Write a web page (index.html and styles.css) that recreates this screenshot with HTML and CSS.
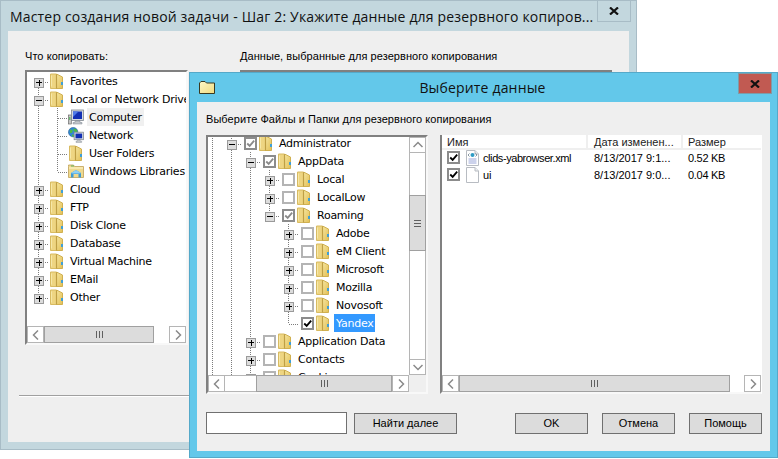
FILE: index.html
```html
<!DOCTYPE html>
<html lang="ru">
<head>
    <meta charset="UTF-8">
    <title>Мастер создания новой задачи</title>
    <link rel="stylesheet" href="styles.css">
</head>
<body>
    <svg class="sprite" aria-hidden="true">
        <defs>
            <linearGradient id="folderFront" x1="0" y1="0" x2="1" y2="1">
                <stop offset="0" stop-color="#f6e6a0"/>
                <stop offset="1" stop-color="#e2bf55"/>
            </linearGradient>
            <linearGradient id="smallFolder" x1="0" y1="0" x2="1" y2="1">
                <stop offset="0" stop-color="#fdf8c8"/>
                <stop offset="1" stop-color="#f0dc80"/>
            </linearGradient>
            <symbol id="folder" viewBox="0 0 13 16">
                <path d="M.5 1h5.500l1 1v13.500H.5z" fill="#eed582" stroke="#d8bb62" stroke-width="1"/>
                <path d="M6.500 1l6 3v11.500h-6z" fill="url(#folderFront)" stroke="#d0b050" stroke-width="1"/>
                <path d="M6.500 1.500v14" stroke="#bf9f45" stroke-width="1.200"/>
                <path d="M1.500 2.500v11" stroke="#f6e8a8" stroke-width="1"/>
                <rect x="11" y="9" width="2" height="3" fill="#3f9fd6"/>
            </symbol>
            <symbol id="computer" viewBox="0 0 16 16">
                <rect x=".3" y="6" width="3" height="9" fill="#c6c6c6" stroke="#5f5f5f" stroke-width=".6"/>
                <rect x="1.300" y="8" width="1" height="3" fill="#3fae4a"/>
                <rect x="3.500" y="1" width="12" height="10.500" fill="#d4dae0" stroke="#7f8790" stroke-width=".8"/>
                <rect x="5" y="2.500" width="9" height="7.500" fill="#1230b4"/>
                <path d="M5 2.500h5.500L5 8z" fill="#4e7be8"/>
                <path d="M7 12h5v1.500h2V15H5v-1.500h2z" fill="#c4c8cc" stroke="#7f8790" stroke-width=".5"/>
            </symbol>
            <symbol id="network" viewBox="0 0 17 17">
                <circle cx="5.500" cy="5.500" r="5" fill="#2f86d8" stroke="#25598f" stroke-width=".6"/>
                <path d="M2 3c2-1 3 0 3 1.500S3 7 2 6.500zM6 1.500c2 0 4 1 4 3S8 6 7 5s-2-2-1-3.500zM4 8c1.500 0 3 .5 2.500 2.500L4.500 10z" fill="#4cb848"/>
                <rect x="6.500" y="5.500" width="10" height="8" fill="#d4dae0" stroke="#7f8790" stroke-width=".8"/>
                <rect x="8" y="7" width="7" height="5" fill="#1230b4"/>
                <path d="M10 14h3v1h1.500v1.500h-6V15H10z" fill="#c4c8cc" stroke="#7f8790" stroke-width=".4"/>
            </symbol>
            <symbol id="library" viewBox="0 0 16 14">
                <path d="M.5 2.500V1h5l1 1.500h9v11H.5z" fill="#efd98e" stroke="#bfa158" stroke-width=".8"/>
                <path d="M1 4h14" stroke="#fff7cc" stroke-width="1"/>
                <path d="M3 2h3" stroke="#5fb25f" stroke-width="1"/>
                <path d="M3 9l5-3 5 3v4.500h-2.500V10h-5v3.500H3z" fill="#3d9ad6"/>
                <path d="M3 9l5-3 5 3-1 .5H4z" fill="#8fd0f2"/>
            </symbol>
            <symbol id="xmlfile" viewBox="0 0 13 16">
                <path d="M.5.500h8.500l3.500 3.500v11.500H.5z" fill="#fff" stroke="#b8bcc2"/>
                <path d="M9 .500v3.500h3.500" fill="#e8ebee" stroke="#b8bcc2"/>
                <circle cx="6.500" cy="5" r="2" fill="#2e9bc4"/>
                <path d="M3.500 3.500L2 5l1.500 1.500M9.500 3.500L11 5 9.500 6.500" fill="none" stroke="#6b7d8c" stroke-width=".8"/>
                <path d="M2.500 9h8M2.500 11h8M2.500 13h8" stroke="#9aa6d8"/>
            </symbol>
            <symbol id="blankfile" viewBox="0 0 13 16">
                <path d="M.5.500h8.500l3.500 3.500v11.500H.5z" fill="#fff" stroke="#b8bcc2"/>
                <path d="M9 .500v3.500h3.500" fill="#eef0f2" stroke="#b8bcc2"/>
            </symbol>
            <symbol id="tick" viewBox="0 0 11 11">
                <path d="M1.500 5.500l3 3L10 2" fill="none" stroke="currentColor" stroke-width="2.200"/>
            </symbol>
            <symbol id="cross" viewBox="0 0 10 8">
                <path d="M1 .500l8 7M9 .500l-8 7" fill="none" stroke="currentColor" stroke-width="2.200"/>
            </symbol>
            <symbol id="chevL" viewBox="0 0 8 10"><path d="M6 .500L1.500 5 6 9.500" fill="none" stroke="#8a8a8a" stroke-width="1.500"/></symbol>
            <symbol id="chevR" viewBox="0 0 8 10"><path d="M2 .500L6.500 5 2 9.500" fill="none" stroke="#8a8a8a" stroke-width="1.500"/></symbol>
            <symbol id="chevU" viewBox="0 0 10 8"><path d="M.500 6L5 1.500 9.500 6" fill="none" stroke="#8a8a8a" stroke-width="1.500"/></symbol>
            <symbol id="chevD" viewBox="0 0 10 8"><path d="M.500 2L5 6.500 9.500 2" fill="none" stroke="#8a8a8a" stroke-width="1.500"/></symbol>
        </defs>
    </svg>

    <!-- back window: the wizard -->
    <div class="win win-back">
        <div class="titlebar">
            <span class="title">Мастер создания новой задачи - Шаг 2: Укажите данные для резервного копиров...</span>
            <span class="close"><svg class="cross"><use href="#cross"/></svg></span>
        </div>
        <div class="body">
            <div class="columns">
                <div class="col-what">
                    <div class="label">Что копировать:</div>
                    <div class="tree tree-what">
                        <div class="rows">
                            <div class="row"><span class="c f"><i class="exp plus"></i></span><svg class="ico"><use href="#folder"/></svg><span class="lbl">Favorites</span></div>
                            <div class="row"><span class="c t"><i class="exp"></i></span><svg class="ico"><use href="#folder"/></svg><span class="lbl">Local or Network Drives</span></div>
                            <div class="row"><span class="c v"></span><span class="c t"></span><svg class="ico big"><use href="#computer"/></svg><span class="lbl lbl-hover">Computer</span></div>
                            <div class="row"><span class="c v"></span><span class="c t"></span><svg class="ico big"><use href="#network"/></svg><span class="lbl">Network</span></div>
                            <div class="row"><span class="c v"></span><span class="c t"></span><svg class="ico"><use href="#folder"/></svg><span class="lbl">User Folders</span></div>
                            <div class="row"><span class="c v"></span><span class="c e"></span><svg class="ico big"><use href="#library"/></svg><span class="lbl">Windows Libraries</span></div>
                            <div class="row"><span class="c t"><i class="exp plus"></i></span><svg class="ico"><use href="#folder"/></svg><span class="lbl">Cloud</span></div>
                            <div class="row"><span class="c t"><i class="exp plus"></i></span><svg class="ico"><use href="#folder"/></svg><span class="lbl">FTP</span></div>
                            <div class="row"><span class="c t"><i class="exp plus"></i></span><svg class="ico"><use href="#folder"/></svg><span class="lbl">Disk Clone</span></div>
                            <div class="row"><span class="c t"><i class="exp plus"></i></span><svg class="ico"><use href="#folder"/></svg><span class="lbl">Database</span></div>
                            <div class="row"><span class="c t"><i class="exp plus"></i></span><svg class="ico"><use href="#folder"/></svg><span class="lbl">Virtual Machine</span></div>
                            <div class="row"><span class="c t"><i class="exp plus"></i></span><svg class="ico"><use href="#folder"/></svg><span class="lbl">EMail</span></div>
                            <div class="row"><span class="c e"><i class="exp plus"></i></span><svg class="ico"><use href="#folder"/></svg><span class="lbl">Other</span></div>
                        </div>
                        <div class="hbar">
                            <span class="arrow"><svg class="chev"><use href="#chevL"/></svg></span>
                            <span class="thumb thumb-what"><i class="grip"></i></span>
                            <span class="track"></span>
                            <span class="arrow"><svg class="chev"><use href="#chevR"/></svg></span>
                        </div>
                    </div>
                </div>
                <div class="col-chosen">
                    <div class="label">Данные, выбранные для резервного копирования</div>
                    <div class="chosen-box"></div>
                </div>
            </div>
            <div class="separator"></div>
        </div>
    </div>

    <!-- front window: data picker -->
    <div class="win win-front">
        <div class="titlebar">
            <svg class="title-ico" viewBox="0 0 16 13">
                <path d="M.5 12.500V2L2 .500h4L7.500 2h8v10.500z" fill="url(#smallFolder)" stroke="#3a3a20" stroke-width="1"/>
            </svg>
            <span class="title">Выберите данные</span>
            <span class="close close-red"><svg class="cross"><use href="#cross"/></svg></span>
        </div>
        <div class="body">
            <div class="label">Выберите Файлы и Папки для резервного копирования</div>
            <div class="panes">
                <div class="tree tree-pick">
                    <div class="tree-main">
                        <div class="rows">
                            <div class="row"><span class="c v"></span><span class="c t"><i class="exp"></i></span><i class="cb part"><svg class="tick"><use href="#tick"/></svg></i><svg class="ico"><use href="#folder"/></svg><span class="lbl">Administrator</span></div>
                            <div class="row"><span class="c v"></span><span class="c v"></span><span class="c t"><i class="exp"></i></span><i class="cb part"><svg class="tick"><use href="#tick"/></svg></i><svg class="ico"><use href="#folder"/></svg><span class="lbl">AppData</span></div>
                            <div class="row"><span class="c v"></span><span class="c v"></span><span class="c v"></span><span class="c t"><i class="exp plus"></i></span><i class="cb"></i><svg class="ico"><use href="#folder"/></svg><span class="lbl">Local</span></div>
                            <div class="row"><span class="c v"></span><span class="c v"></span><span class="c v"></span><span class="c t"><i class="exp plus"></i></span><i class="cb"></i><svg class="ico"><use href="#folder"/></svg><span class="lbl">LocalLow</span></div>
                            <div class="row"><span class="c v"></span><span class="c v"></span><span class="c v"></span><span class="c e"><i class="exp"></i></span><i class="cb part"><svg class="tick"><use href="#tick"/></svg></i><svg class="ico"><use href="#folder"/></svg><span class="lbl">Roaming</span></div>
                            <div class="row"><span class="c v"></span><span class="c v"></span><span class="c v"></span><span class="c"></span><span class="c t"><i class="exp plus"></i></span><i class="cb"></i><svg class="ico"><use href="#folder"/></svg><span class="lbl">Adobe</span></div>
                            <div class="row"><span class="c v"></span><span class="c v"></span><span class="c v"></span><span class="c"></span><span class="c t"><i class="exp plus"></i></span><i class="cb"></i><svg class="ico"><use href="#folder"/></svg><span class="lbl">eM Client</span></div>
                            <div class="row"><span class="c v"></span><span class="c v"></span><span class="c v"></span><span class="c"></span><span class="c t"><i class="exp plus"></i></span><i class="cb"></i><svg class="ico"><use href="#folder"/></svg><span class="lbl">Microsoft</span></div>
                            <div class="row"><span class="c v"></span><span class="c v"></span><span class="c v"></span><span class="c"></span><span class="c t"><i class="exp plus"></i></span><i class="cb"></i><svg class="ico"><use href="#folder"/></svg><span class="lbl">Mozilla</span></div>
                            <div class="row"><span class="c v"></span><span class="c v"></span><span class="c v"></span><span class="c"></span><span class="c t"><i class="exp plus"></i></span><i class="cb"></i><svg class="ico"><use href="#folder"/></svg><span class="lbl">Novosoft</span></div>
                            <div class="row"><span class="c v"></span><span class="c v"></span><span class="c v"></span><span class="c"></span><span class="c e"></span><i class="cb on"><svg class="tick"><use href="#tick"/></svg></i><svg class="ico"><use href="#folder"/></svg><span class="lbl lbl-selected">Yandex</span></div>
                            <div class="row"><span class="c v"></span><span class="c v"></span><span class="c t"><i class="exp plus"></i></span><i class="cb"></i><svg class="ico"><use href="#folder"/></svg><span class="lbl">Application Data</span></div>
                            <div class="row"><span class="c v"></span><span class="c v"></span><span class="c t"><i class="exp plus"></i></span><i class="cb"></i><svg class="ico"><use href="#folder"/></svg><span class="lbl">Contacts</span></div>
                            <div class="row"><span class="c v"></span><span class="c v"></span><span class="c t"><i class="exp plus"></i></span><i class="cb"></i><svg class="ico"><use href="#folder"/></svg><span class="lbl">Cookies</span></div>
                        </div>
                        <div class="vbar">
                            <span class="arrow-v"><svg class="chev-v"><use href="#chevU"/></svg></span>
                            <span class="vtrack vtrack-top"></span>
                            <span class="vthumb"><i class="grip-h"></i></span>
                            <span class="vtrack"></span>
                            <span class="arrow-v"><svg class="chev-v"><use href="#chevD"/></svg></span>
                        </div>
                    </div>
                    <div class="hbar-wrap">
                        <div class="hbar">
                            <span class="arrow"><svg class="chev"><use href="#chevL"/></svg></span>
                            <span class="track track-pick"></span>
                            <span class="thumb thumb-pick"><i class="grip"></i></span>
                            <span class="arrow"><svg class="chev"><use href="#chevR"/></svg></span>
                        </div>
                        <span class="corner"></span>
                    </div>
                </div>
                <div class="list">
                    <div class="list-head">
                        <span class="hd hd-name">Имя</span>
                        <span class="hd hd-date">Дата изменен...</span>
                        <span class="hd hd-size">Размер</span>
                    </div>
                    <div class="list-rows">
                        <div class="file">
                            <i class="cb on small"><svg class="tick"><use href="#tick"/></svg></i>
                            <svg class="file-ico"><use href="#xmlfile"/></svg>
                            <span class="file-name file-name-long">clids-yabrowser.xml</span>
                            <span class="file-date">8/13/2017 9:1...</span>
                            <span class="file-size">0.52 KB</span>
                        </div>
                        <div class="file">
                            <i class="cb on small"><svg class="tick"><use href="#tick"/></svg></i>
                            <svg class="file-ico"><use href="#blankfile"/></svg>
                            <span class="file-name">ui</span>
                            <span class="file-date">8/13/2017 9:0...</span>
                            <span class="file-size">0.04 KB</span>
                        </div>
                    </div>
                    <div class="hbar">
                        <span class="arrow"><svg class="chev"><use href="#chevL"/></svg></span>
                        <span class="thumb thumb-list"><i class="grip"></i></span>
                        <span class="track"></span>
                        <span class="arrow"><svg class="chev"><use href="#chevR"/></svg></span>
                    </div>
                </div>
            </div>
            <div class="footer">
                <input class="search" type="text">
                <button class="btn btn-next">Найти далее</button>
                <span class="spacer"></span>
                <button class="btn">OK</button>
                <button class="btn">Отмена</button>
                <button class="btn">Помощь</button>
            </div>
        </div>
    </div>
</body>
</html>
```

FILE: styles.css
```css
:root {
    --dots-v: repeating-linear-gradient(to bottom, #7c7c7c 0 1px, transparent 1px 2px);
    --dots-h: repeating-linear-gradient(to right, #7c7c7c 0 1px, transparent 1px 2px);
}
html, body {
    margin: 0;
    padding: 0;
    height: 100%;
    overflow: hidden;
    background-color: #fff;
}
body {
    font-family: 'DejaVu Sans', sans-serif;
    font-size: 11px;
    color: #000;
}
.sprite {
    position: absolute;
    width: 0;
    height: 0;
}

/* windows */
.win {
    position: absolute;
    box-sizing: border-box;
    display: flex;
    flex-direction: column;
}
.win-back {
    left: 0;
    top: 0;
    width: 637px;
    height: 450px;
    background-color: #c3d7de;
    border: 1px solid #a8bcc6;
}
.win-front {
    left: 189px;
    top: 72px;
    width: 589px;
    height: 386px;
    background-color: #63c8ea;
    border: 1px solid #55a9c9;
}
.titlebar {
    display: flex;
    align-items: center;
    position: relative;
}
.win-back .titlebar {
    height: 30px;
    padding-left: 9px;
}
.win-front .titlebar {
    height: 29px;
    padding-left: 9px;
    padding-right: 27px;
}
.title {
    font-family: 'Open Sans', sans-serif;
    font-size: 14px;
    letter-spacing: 0.17px;
    color: #111;
    white-space: nowrap;
}
.win-front .title {
    flex: 1;
    text-align: center;
}
.title-ico {
    width: 16px;
    height: 13px;
    flex: none;
}
.close {
    position: absolute;
    top: -1px;
    right: 5px;
    box-sizing: border-box;
    width: 34px;
    height: 22px;
    display: flex;
    align-items: center;
    justify-content: center;
    background-color: #c3d7de;
    border: 1px solid #a8bcc6;
    color: #111;
}
.close-red {
    top: 0;
    right: 5px;
    height: 21px;
    background-color: #c15a52;
    border-color: #7f9aa6;
}
.cross {
    width: 10px;
    height: 8px;
}
.body {
    flex: 1;
    background-color: #efefef;
    border: 0;
}
.win-back .body {
    margin: 0 7px 7px 7px;
    padding: 18px 17px 0 17px;
}
.win-front .body {
    margin: 0 7px 6px 7px;
    padding: 10px 8px 0 9px;
}
.label {
    height: 14px;
    line-height: 14px;
    white-space: nowrap;
    font-family: 'Liberation Sans', sans-serif;
    font-size: 11px;
    letter-spacing: 0.06px;
}

/* wizard columns */
.columns {
    display: flex;
    gap: 52px;
}
.col-what {
    width: 163px;
    flex: none;
}
.col-chosen {
    flex: 1;
}
.chosen-box {
    margin-top: 7px;
    height: 100px;
    border-top: 2px solid #808080;
}
.separator {
    margin: 50px 0 0 -6px;
    height: 1px;
    background-color: #a0a0a0;
    border-bottom: 1px solid #fff;
}

/* trees */
.tree {
    box-sizing: border-box;
    background-color: #fff;
    border: 2px solid #808080;
    border-right-color: #f8f8f8;
    border-bottom-color: #f8f8f8;
    display: flex;
    flex-direction: column;
    overflow: hidden;
}
.tree-what {
    margin-top: 7px;
    height: 275px;
}
.rows {
    flex: 1;
    overflow: hidden;
    min-width: 0;
}
.tree-what .rows {
    padding-left: 2px;
}
.tree-pick {
    width: 222px;
    flex: none;
}
.tree-main {
    flex: 1;
    display: flex;
    min-height: 0;
}
.tree-pick .row:first-child {
    margin-top: -3px;
}
.tree-pick .row {
    margin-left: -5px;
}
.row {
    display: flex;
    align-items: center;
    height: 18px;
    white-space: nowrap;
}
.c {
    width: 19px;
    height: 18px;
    flex: none;
    display: flex;
    align-items: center;
    justify-content: center;
}
.v {
    background: var(--dots-v) 9px 0 / 1px 100% no-repeat;
}
.t {
    background:
        var(--dots-v) 9px 0 / 1px 100% no-repeat,
        var(--dots-h) 10px 10px / 9px 1px no-repeat;
}
.e {
    background:
        var(--dots-v) 9px 0 / 1px 10px no-repeat,
        var(--dots-h) 10px 10px / 9px 1px no-repeat;
}
.f {
    background:
        var(--dots-v) 9px 10px / 1px 8px no-repeat,
        var(--dots-h) 10px 10px / 9px 1px no-repeat;
}
.exp {
    box-sizing: border-box;
    width: 10px;
    height: 10px;
    margin: 3px 0 0 1px;
    border: 1px solid #9a9a9a;
    background:
        linear-gradient(#000, #000) center / 6px 1px no-repeat,
        #dcdcdc;
}
.exp.plus {
    background:
        linear-gradient(#000, #000) center / 6px 1px no-repeat,
        linear-gradient(#000, #000) center / 1px 6px no-repeat,
        #dcdcdc;
}
.ico {
    width: 13px;
    height: 16px;
    flex: none;
    margin: 0 5px 0 2px;
}
.ico.big {
    width: 16px;
    height: 16px;
    margin: 0 3px 0 1px;
}
.lbl {
    box-sizing: border-box;
    height: 18px;
    padding: 1px 2px 0;
    line-height: 17px;
    letter-spacing: -0.25px;
}
.lbl-hover {
    background-color: #f0f0f0;
}
.lbl-selected {
    background-color: #3399ff;
    color: #fff;
}
.cb {
    box-sizing: border-box;
    width: 13px;
    height: 13px;
    flex: none;
    margin-left: 3px;
    background-color: #fff;
    border: 2px solid #b4b4b4;
    display: flex;
    align-items: center;
    justify-content: center;
}
.cb.part {
    border-color: #8c8c8c;
    color: #8a8a8a;
}
.cb.on {
    border-color: #8c8c8c;
    color: #000;
}
.cb.small {
    margin-left: 5px;
}
.tick {
    width: 9px;
    height: 9px;
}

/* scroll bars */
.hbar {
    height: 17px;
    flex: none;
    display: flex;
    background-color: #fff;
}
.arrow {
    box-sizing: border-box;
    width: 17px;
    flex: none;
    border: 1px solid #b5b5b5;
    display: flex;
    align-items: center;
    justify-content: center;
}
.chev {
    width: 8px;
    height: 10px;
}
.thumb {
    box-sizing: border-box;
    flex: none;
    background-color: #dcdcdc;
    border: 1px solid #a0a0a0;
    display: flex;
    align-items: center;
    justify-content: center;
}
.thumb-what {
    width: 110px;
}
.thumb-pick {
    width: 136px;
}
.thumb-list {
    width: 271px;
}
.track {
    flex: 1;
}
.track-pick {
    border-top: 1px solid #b5b5b5;
    border-bottom: 1px solid #b5b5b5;
}
.grip {
    width: 7px;
    height: 7px;
    background: repeating-linear-gradient(to right, #606060 0 1px, transparent 1px 3px);
}
.hbar-wrap {
    display: flex;
    height: 17px;
    flex: none;
}
.hbar-wrap .hbar {
    flex: 1;
}
.corner {
    width: 17px;
    flex: none;
    background-color: #efefef;
}
.vbar {
    width: 17px;
    flex: none;
    display: flex;
    flex-direction: column;
    background-color: #fff;
}
.arrow-v {
    box-sizing: border-box;
    height: 16px;
    flex: none;
    border: 1px solid #b5b5b5;
    display: flex;
    align-items: center;
    justify-content: center;
}
.chev-v {
    width: 10px;
    height: 8px;
}
.vtrack {
    flex: 1;
    border-left: 1px solid #b5b5b5;
    border-right: 1px solid #b5b5b5;
}
.vtrack-top {
    flex: none;
    height: 42px;
}
.vthumb {
    box-sizing: border-box;
    height: 56px;
    flex: none;
    background-color: #dcdcdc;
    border: 1px solid #a0a0a0;
    display: flex;
    align-items: center;
    justify-content: center;
}
.grip-h {
    width: 7px;
    height: 7px;
    background: repeating-linear-gradient(to bottom, #606060 0 1px, transparent 1px 3px);
}

/* file list */
.panes {
    display: flex;
    gap: 12px;
    height: 259px;
    margin-top: 9px;
}
.list {
    flex: 1;
    box-sizing: border-box;
    background-color: #fff;
    border-left: 2px solid #808080;
    display: flex;
    flex-direction: column;
    border-bottom: 2px solid #f8f8f8;
    border-right: 1px solid #fff;
}
.list-head {
    display: flex;
    height: 13px;
    margin-bottom: -1px;
    border-bottom: 2px solid #efefef;
    font-family: 'Liberation Sans', sans-serif;
    color: #222;
}
.hd {
    box-sizing: border-box;
    padding: 1px 0 0 5px;
    line-height: 13px;
    border-right: 2px solid #efefef;
    white-space: nowrap;
}
.hd-name {
    width: 146px;
}
.hd-date {
    width: 95px;
    padding-left: 6px;
}
.hd-size {
    width: 78px;
    border-right: 0;
}
.list-rows {
    flex: 1;
}
.file {
    display: flex;
    align-items: center;
    height: 17px;
    font-family: 'Liberation Sans', sans-serif;
    white-space: nowrap;
}
.file-ico {
    width: 13px;
    height: 16px;
    flex: none;
    margin: 0 4px 0 6px;
}
.file-name {
    width: 111px;
    flex: none;
}
.file-name-long {
    letter-spacing: -0.42px;
}
.file-date {
    width: 94px;
    flex: none;
}
.file-size {
    flex: 1;
    letter-spacing: -0.3px;
}

/* footer */
.footer {
    display: flex;
    align-items: center;
    gap: 14px;
    margin-top: 18px;
}
.search {
    box-sizing: border-box;
    width: 141px;
    height: 22px;
    padding: 0;
    margin-right: -7px;
    background-color: #fff;
    border: 1px solid #707070;
    border-radius: 0;
}
.btn {
    box-sizing: border-box;
    width: 73px;
    height: 21px;
    padding: 0;
    font-family: 'Liberation Sans', sans-serif;
    font-size: 11px;
    color: #000;
    background-color: #dcdcdc;
    border: 1px solid #707070;
    border-radius: 0;
}
.btn-next {
    width: 103px;
}
.spacer {
    flex: 1;
    margin-right: -14px;
}
```
